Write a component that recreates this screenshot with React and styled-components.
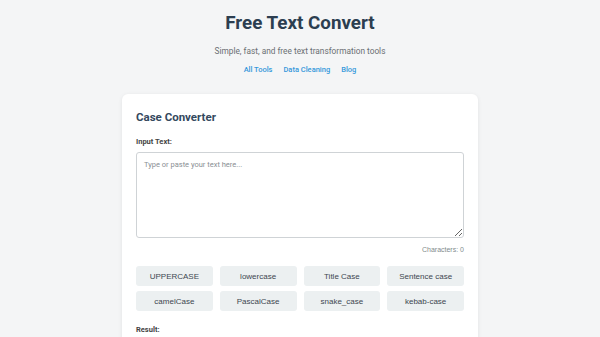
import styled, { createGlobalStyle } from "styled-components";
import { useState } from "react";

const GlobalStyle = createGlobalStyle`
  html, body {
    margin: 0;
    padding: 0;
    background: #f4f5f6;
    font-family: Roboto, "Liberation Sans", Arial, sans-serif;
    color: #2c3e50;
  }
`;

const Page = styled.div`
  display: flex;
  flex-direction: column;
  align-items: center;
  height: 337px;
  overflow: hidden;
`;

const Header = styled.header`
  display: flex;
  flex-direction: column;
  align-items: center;
  padding-top: 11px;
`;

const Title = styled.h1`
  margin: 0;
  font-size: 18.8px;
  line-height: 24px;
  font-weight: 700;
  color: #2c3e50;
`;

const Subtitle = styled.p`
  margin: 11px 0 0;
  font-size: 8.3px;
  line-height: 10px;
  color: #6b6f73;
`;

const Nav = styled.nav`
  display: flex;
  gap: 11px;
  margin-top: 9px;
`;

const NavLink = styled.a`
  font-size: 7.5px;
  line-height: 10px;
  font-weight: 500;
  color: #3498db;
  text-decoration: none;
`;

const Card = styled.main`
  width: 356px;
  box-sizing: border-box;
  margin-top: 19px;
  padding: 15px 14px 20px;
  background: #fff;
  border-radius: 6px;
  box-shadow: 0 1px 4px rgba(0, 0, 0, 0.08);
`;

const CardTitle = styled.h2`
  margin: 0;
  font-size: 11.5px;
  line-height: 16px;
  font-weight: 700;
  color: #34495e;
`;

const Label = styled.label`
  display: block;
  margin-top: ${(p) => p.$top || 9}px;
  font-size: 7.5px;
  line-height: 10px;
  font-weight: 700;
  color: #444;
`;

const Input = styled.textarea`
  display: block;
  width: 100%;
  height: 86px;
  box-sizing: border-box;
  margin-top: 5px;
  padding: 7px;
  border: 1px solid #cfd3d6;
  border-radius: 3px;
  resize: vertical;
  font-family: Roboto, "Liberation Sans", Arial, sans-serif;
  font-size: 7.5px;
  color: #333;
  &::placeholder {
    color: #8a8f94;
  }
`;

const Count = styled.div`
  margin-top: 7px;
  text-align: right;
  font-family: "Liberation Sans", Arial, sans-serif;
  font-size: 7px;
  line-height: 10px;
  color: #7f8c8d;
`;

const Buttons = styled.div`
  display: grid;
  grid-template-columns: repeat(4, 1fr);
  gap: 5px 7px;
  margin-top: 11px;
`;

const CaseButton = styled.button`
  height: 20px;
  border: none;
  border-radius: 3px;
  background: #ecf0f1;
  font-family: "Liberation Sans", Arial, sans-serif;
  font-size: 8px;
  color: #3d4750;
  cursor: pointer;
`;

const cases = [
  "UPPERCASE",
  "lowercase",
  "Title Case",
  "Sentence case",
  "camelCase",
  "PascalCase",
  "snake_case",
  "kebab-case",
];

export default function App() {
  const [text, setText] = useState("");

  return (
    <Page>
      <GlobalStyle />
      <Header>
        <Title>Free Text Convert</Title>
        <Subtitle>Simple, fast, and free text transformation tools</Subtitle>
        <Nav>
          <NavLink href="#">All Tools</NavLink>
          <NavLink href="#">Data Cleaning</NavLink>
          <NavLink href="#">Blog</NavLink>
        </Nav>
      </Header>
      <Card>
        <CardTitle>Case Converter</CardTitle>
        <Label $top={12}>Input Text:</Label>
        <Input
          placeholder="Type or paste your text here..."
          value={text}
          onChange={(e) => setText(e.target.value)}
        />
        <Count>Characters: {text.length}</Count>
        <Buttons>
          {cases.map((c) => (
            <CaseButton key={c}>{c}</CaseButton>
          ))}
        </Buttons>
        <Label $top={14}>Result:</Label>
      </Card>
    </Page>
  );
}
